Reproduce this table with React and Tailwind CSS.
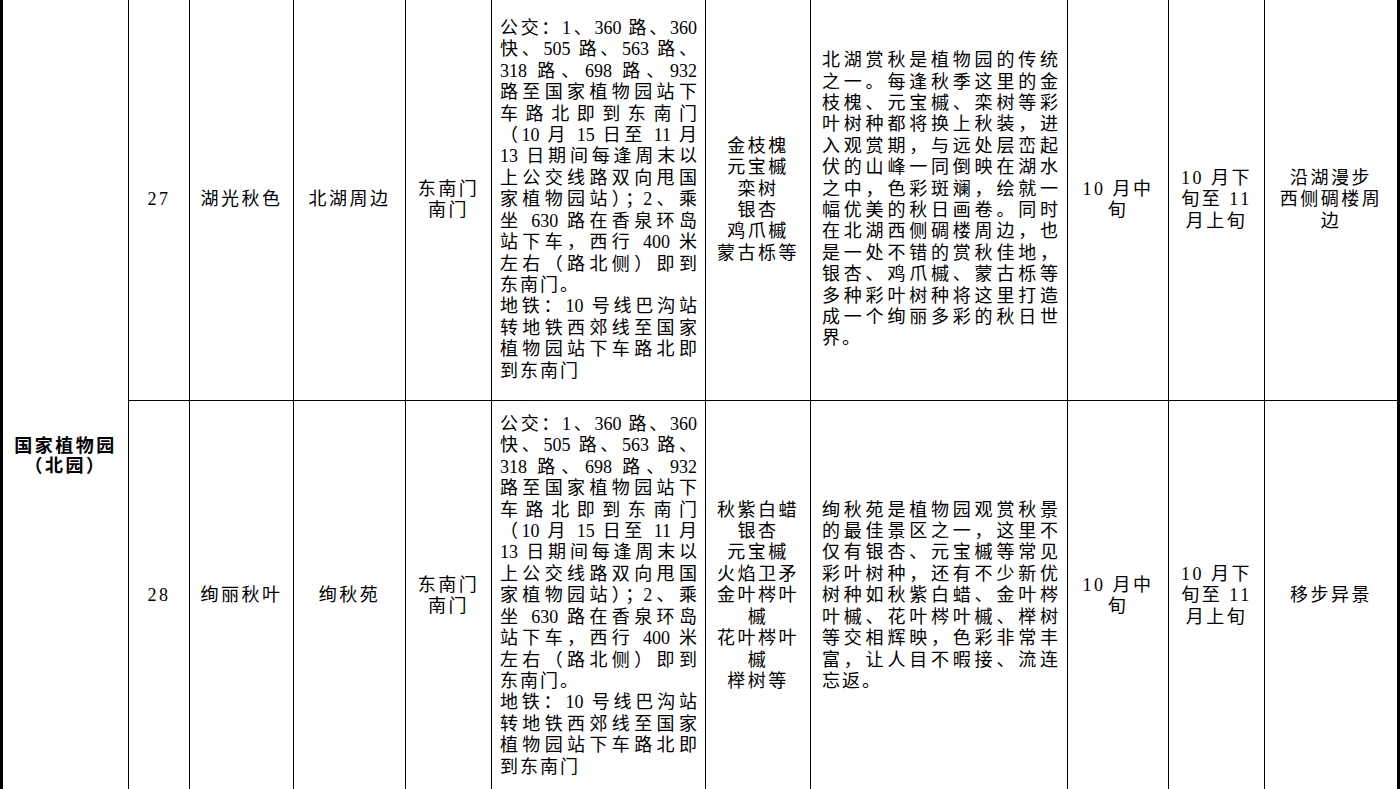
const TRANSIT = [
  '公交：1、360 路、360',
  '快、505 路、563 路、',
  '318 路、698 路、932',
  '路至国家植物园站下',
  '车路北即到东南门',
  '（10 月 15 日至 11 月',
  '13 日期间每逢周末以',
  '上公交线路双向甩国',
  '家植物园站）；2、乘',
  '坐 630 路在香泉环岛',
  '站下车，西行 400 米',
  '左右（路北侧）即到',
  { text: '东南门。', last: true },
  '地铁：10 号线巴沟站',
  '转地铁西郊线至国家',
  '植物园站下车路北即',
  { text: '到东南门', last: true },
]

const ROWS = [
  {
    no: '27',
    name: '湖光秋色',
    place: '北湖周边',
    gate: ['东南门', '南门'],
    species: ['金枝槐', '元宝槭', '栾树', '银杏', '鸡爪槭', '蒙古栎等'],
    desc: [
      '北湖赏秋是植物园的传统',
      '之一。每逢秋季这里的金',
      '枝槐、元宝槭、栾树等彩',
      '叶树种都将换上秋装，进',
      '入观赏期，与远处层峦起',
      '伏的山峰一同倒映在湖水',
      '之中，色彩斑斓，绘就一',
      '幅优美的秋日画卷。同时',
      '在北湖西侧碉楼周边，也',
      '是一处不错的赏秋佳地，',
      '银杏、鸡爪槭、蒙古栎等',
      '多种彩叶树种将这里打造',
      '成一个绚丽多彩的秋日世',
      { text: '界。', last: true },
    ],
    best: ['10 月中', '旬'],
    period: ['10 月下', '旬至 11', '月上旬'],
    route: ['沿湖漫步', '西侧碉楼周', '边'],
  },
  {
    no: '28',
    name: '绚丽秋叶',
    place: '绚秋苑',
    gate: ['东南门', '南门'],
    species: ['秋紫白蜡', '银杏', '元宝槭', '火焰卫矛', '金叶梣叶', '槭', '花叶梣叶', '槭', '榉树等'],
    desc: [
      '绚秋苑是植物园观赏秋景',
      '的最佳景区之一，这里不',
      '仅有银杏、元宝槭等常见',
      '彩叶树种，还有不少新优',
      '树种如秋紫白蜡、金叶梣',
      '叶槭、花叶梣叶槭、榉树',
      '等交相辉映，色彩非常丰',
      '富，让人目不暇接、流连',
      { text: '忘返。', last: true },
    ],
    best: ['10 月中', '旬'],
    period: ['10 月下', '旬至 11', '月上旬'],
    route: ['移步异景'],
  },
]

function Centered({ lines }) {
  return (
    <div className="bg-white flex flex-col items-center justify-center text-center tracking-[2.5px]">
      {lines.map((l, i) => (
        <div key={i} className="whitespace-nowrap">{l}</div>
      ))}
    </div>
  )
}

function Justified({ lines, className }) {
  return (
    <div className={`bg-white flex flex-col justify-center ${className}`}>
      {lines.map((l, i) =>
        typeof l === 'string' ? (
          <div key={i} className="text-justify [text-align-last:justify]">{l}</div>
        ) : (
          <div key={i} className="text-left tracking-[2px]">{l.text}</div>
        )
      )}
    </div>
  )
}

export default function App() {
  return (
    <div className="h-[789px] w-[1400px] overflow-hidden bg-white text-black text-[18px] leading-[21.4px] font-['Liberation_Serif','Noto_Sans_CJK_SC',serif]">
      <div className="grid grid-cols-[125px_60px_103px_111px_85px_213px_104px_256px_100px_95px_132px] grid-rows-[400px_390px] gap-px bg-black border-x-[3px] border-black">
        <div className="row-span-2 bg-white flex flex-col items-center pt-[436px] font-bold leading-[20px] tracking-[2.5px]">
          <div>国家植物园</div>
          <div>（北园）</div>
        </div>
        {ROWS.map(r => (
          <Row key={r.no} r={r} />
        ))}
      </div>
    </div>
  )
}

function Row({ r }) {
  return (
    <>
      <Centered lines={[r.no]} />
      <Centered lines={[r.name]} />
      <Centered lines={[r.place]} />
      <Centered lines={r.gate} />
      <Justified lines={TRANSIT} className="px-2" />
      <Centered lines={r.species} />
      <Justified lines={r.desc} className="pl-[11px] pr-[9px]" />
      <Centered lines={r.best} />
      <Centered lines={r.period} />
      <Centered lines={r.route} />
    </>
  )
}
